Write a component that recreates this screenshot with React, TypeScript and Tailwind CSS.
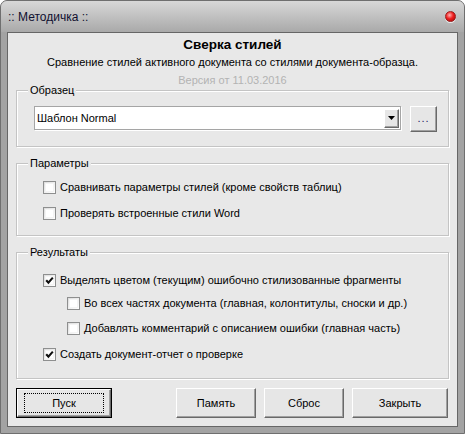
import React from "react";

const FONT = { fontFamily: '"Liberation Sans", Arial, sans-serif' };

function Check({ checked }: { checked?: boolean }) {
  return (
    <span className="relative flex h-[13px] w-[13px] shrink-0 items-center justify-center border border-[#8e8f8f] bg-linear-to-br from-[#dcdcdc] to-white">
      <span className="absolute inset-[1px] border border-[#f4f4f4] bg-white" />
      {checked && (
        <svg viewBox="0 0 11 11" className="relative h-[11px] w-[11px]">
          <path d="M2.2 5.3 L4.4 7.6 L8.8 2.6" fill="none" stroke="#111" strokeWidth="2.1" />
        </svg>
      )}
    </span>
  );
}

function Row({
  label,
  checked,
  className = "",
}: {
  label: string;
  checked?: boolean;
  className?: string;
}) {
  return (
    <div className={`flex h-[16px] items-center gap-[4px] ${className}`}>
      <Check checked={checked} />
      <span className="text-[11px] leading-none text-black">{label}</span>
    </div>
  );
}

function Group({
  title,
  className = "",
  children,
}: {
  title: string;
  className?: string;
  children: React.ReactNode;
}) {
  return (
    <div
      className={`relative w-[433px] border border-[#c4c4c4] shadow-[inset_1px_1px_0_#fff,1px_1px_0_#fff] ${className}`}
    >
      <span className="absolute -top-[8px] left-[11px] bg-[#e8e8e8] px-[2px] text-[11px] leading-[14px] text-black">
        {title}
      </span>
      {children}
    </div>
  );
}

function Btn({
  label,
  w,
  focused,
}: {
  label: string;
  w: string;
  focused?: boolean;
}) {
  return (
    <button
      className={`${w} flex h-[30px] items-center justify-center text-[11px] text-black ${
        focused ? "border border-black" : ""
      }`}
    >
      <span className="flex h-full w-full items-center justify-center border border-t-white border-l-white border-r-[#696969] border-b-[#696969] bg-[#e6e6e6] shadow-[inset_-1px_-1px_0_#a0a0a0]">
        {focused ? (
          <span className="flex h-[20px] w-[88%] items-center justify-center border border-dotted border-black">
            {label}
          </span>
        ) : (
          label
        )}
      </span>
    </button>
  );
}

export default function App() {
  return (
    <div style={FONT} className="h-[434px] w-[465px] bg-white">
      <div className="flex h-[434px] w-[465px] flex-col overflow-hidden rounded-t-[7px] border border-[#6f6f6f] bg-[#a3a3a3]">
        {/* Title bar */}
        <div className="flex h-[31px] shrink-0 items-center justify-between bg-linear-to-b from-[#d8d8d8] to-[#a9a9a9] pl-[7px] pr-[8px]">
          <span className="pt-[1px] text-[12px] text-[#101030]">:: Методичка ::</span>
          <span className="h-[11px] w-[11px] rounded-full border border-[#9b1c1c] bg-[radial-gradient(circle_at_40%_35%,#ffb0b0,#ee2020_45%,#a00000_100%)] shadow-[0_1px_0_#e8e8e8]" />
        </div>

        {/* Client area */}
        <div className="mx-[6px] mb-[6px] flex flex-1 flex-col border border-[#666] bg-[#e8e8e8] px-2 pt-[3px]">
          <div className="text-center text-[13.5px] font-bold leading-[18px] text-black">
            Сверка стилей
          </div>
          <div className="text-center text-[11px] leading-[16px] text-black">
            Сравнение стилей активного документа со стилями документа-образца.
          </div>
          <div className="mt-[2px] text-center text-[11px] leading-[16px] text-[#b3b3b3]">
            Версия от 11.03.2016
          </div>

          <Group title="Образец" className="mt-[2px] h-[57px]">
            <div className="flex items-start pl-[17px] pt-[15px]">
              <div className="flex h-[24px] w-[367px] items-center justify-between border border-[#a5a5a5] bg-white pl-[2px] pr-[1px] shadow-[1px_1px_0_#fff]">
                <span className="text-[11px] text-black">Шаблон Normal</span>
                <span className="flex h-[19px] w-[15px] items-center justify-center border border-t-white border-l-white border-r-[#696969] border-b-[#696969] bg-[#e6e6e6] shadow-[inset_-1px_-1px_0_#a0a0a0]">
                  <svg viewBox="0 0 7 4" className="h-[4px] w-[7px]">
                    <path d="M0 0 H7 L3.5 4 Z" fill="#000" />
                  </svg>
                </span>
              </div>
              <div className="ml-[9px] flex h-[26px] w-[27px] items-end justify-center border border-t-white border-l-white border-r-[#696969] border-b-[#696969] bg-[#e6e6e6] pb-[7px] shadow-[inset_-1px_-1px_0_#a0a0a0]">
                <span className="text-[11px] leading-none tracking-[1px] text-[#202060]">...</span>
              </div>
            </div>
          </Group>

          <Group title="Параметры" className="mt-[16px] h-[73px]">
            <div className="flex flex-col pl-[26px] pt-[15px]">
              <Row label="Сравнивать параметры стилей (кроме свойств таблиц)" />
              <Row label="Проверять встроенные стили Word" className="mt-[10px]" />
            </div>
          </Group>

          <Group title="Результаты" className="mt-[16px] h-[127px]">
            <div className="flex flex-col pl-[26px] pt-[19px]">
              <Row label="Выделять цветом (текущим) ошибочно стилизованные фрагменты" checked />
              <Row
                label="Во всех частях документа (главная, колонтитулы, сноски и др.)"
                className="ml-[24px] mt-[7px]"
              />
              <Row
                label="Добавлять комментарий с описанием ошибки (главная часть)"
                className="ml-[24px] mt-[9px]"
              />
              <Row label="Создать документ-отчет о проверке" checked className="mt-[10px]" />
            </div>
          </Group>

          <div className="mt-[9px] flex items-center">
            <Btn label="Пуск" w="w-[96px]" focused />
            <div className="ml-[64px] flex gap-[8px]">
              <Btn label="Память" w="w-[80px]" />
              <Btn label="Сброс" w="w-[80px]" />
              <Btn label="Закрыть" w="w-[96px]" />
            </div>
          </div>
        </div>
      </div>
    </div>
  );
}
